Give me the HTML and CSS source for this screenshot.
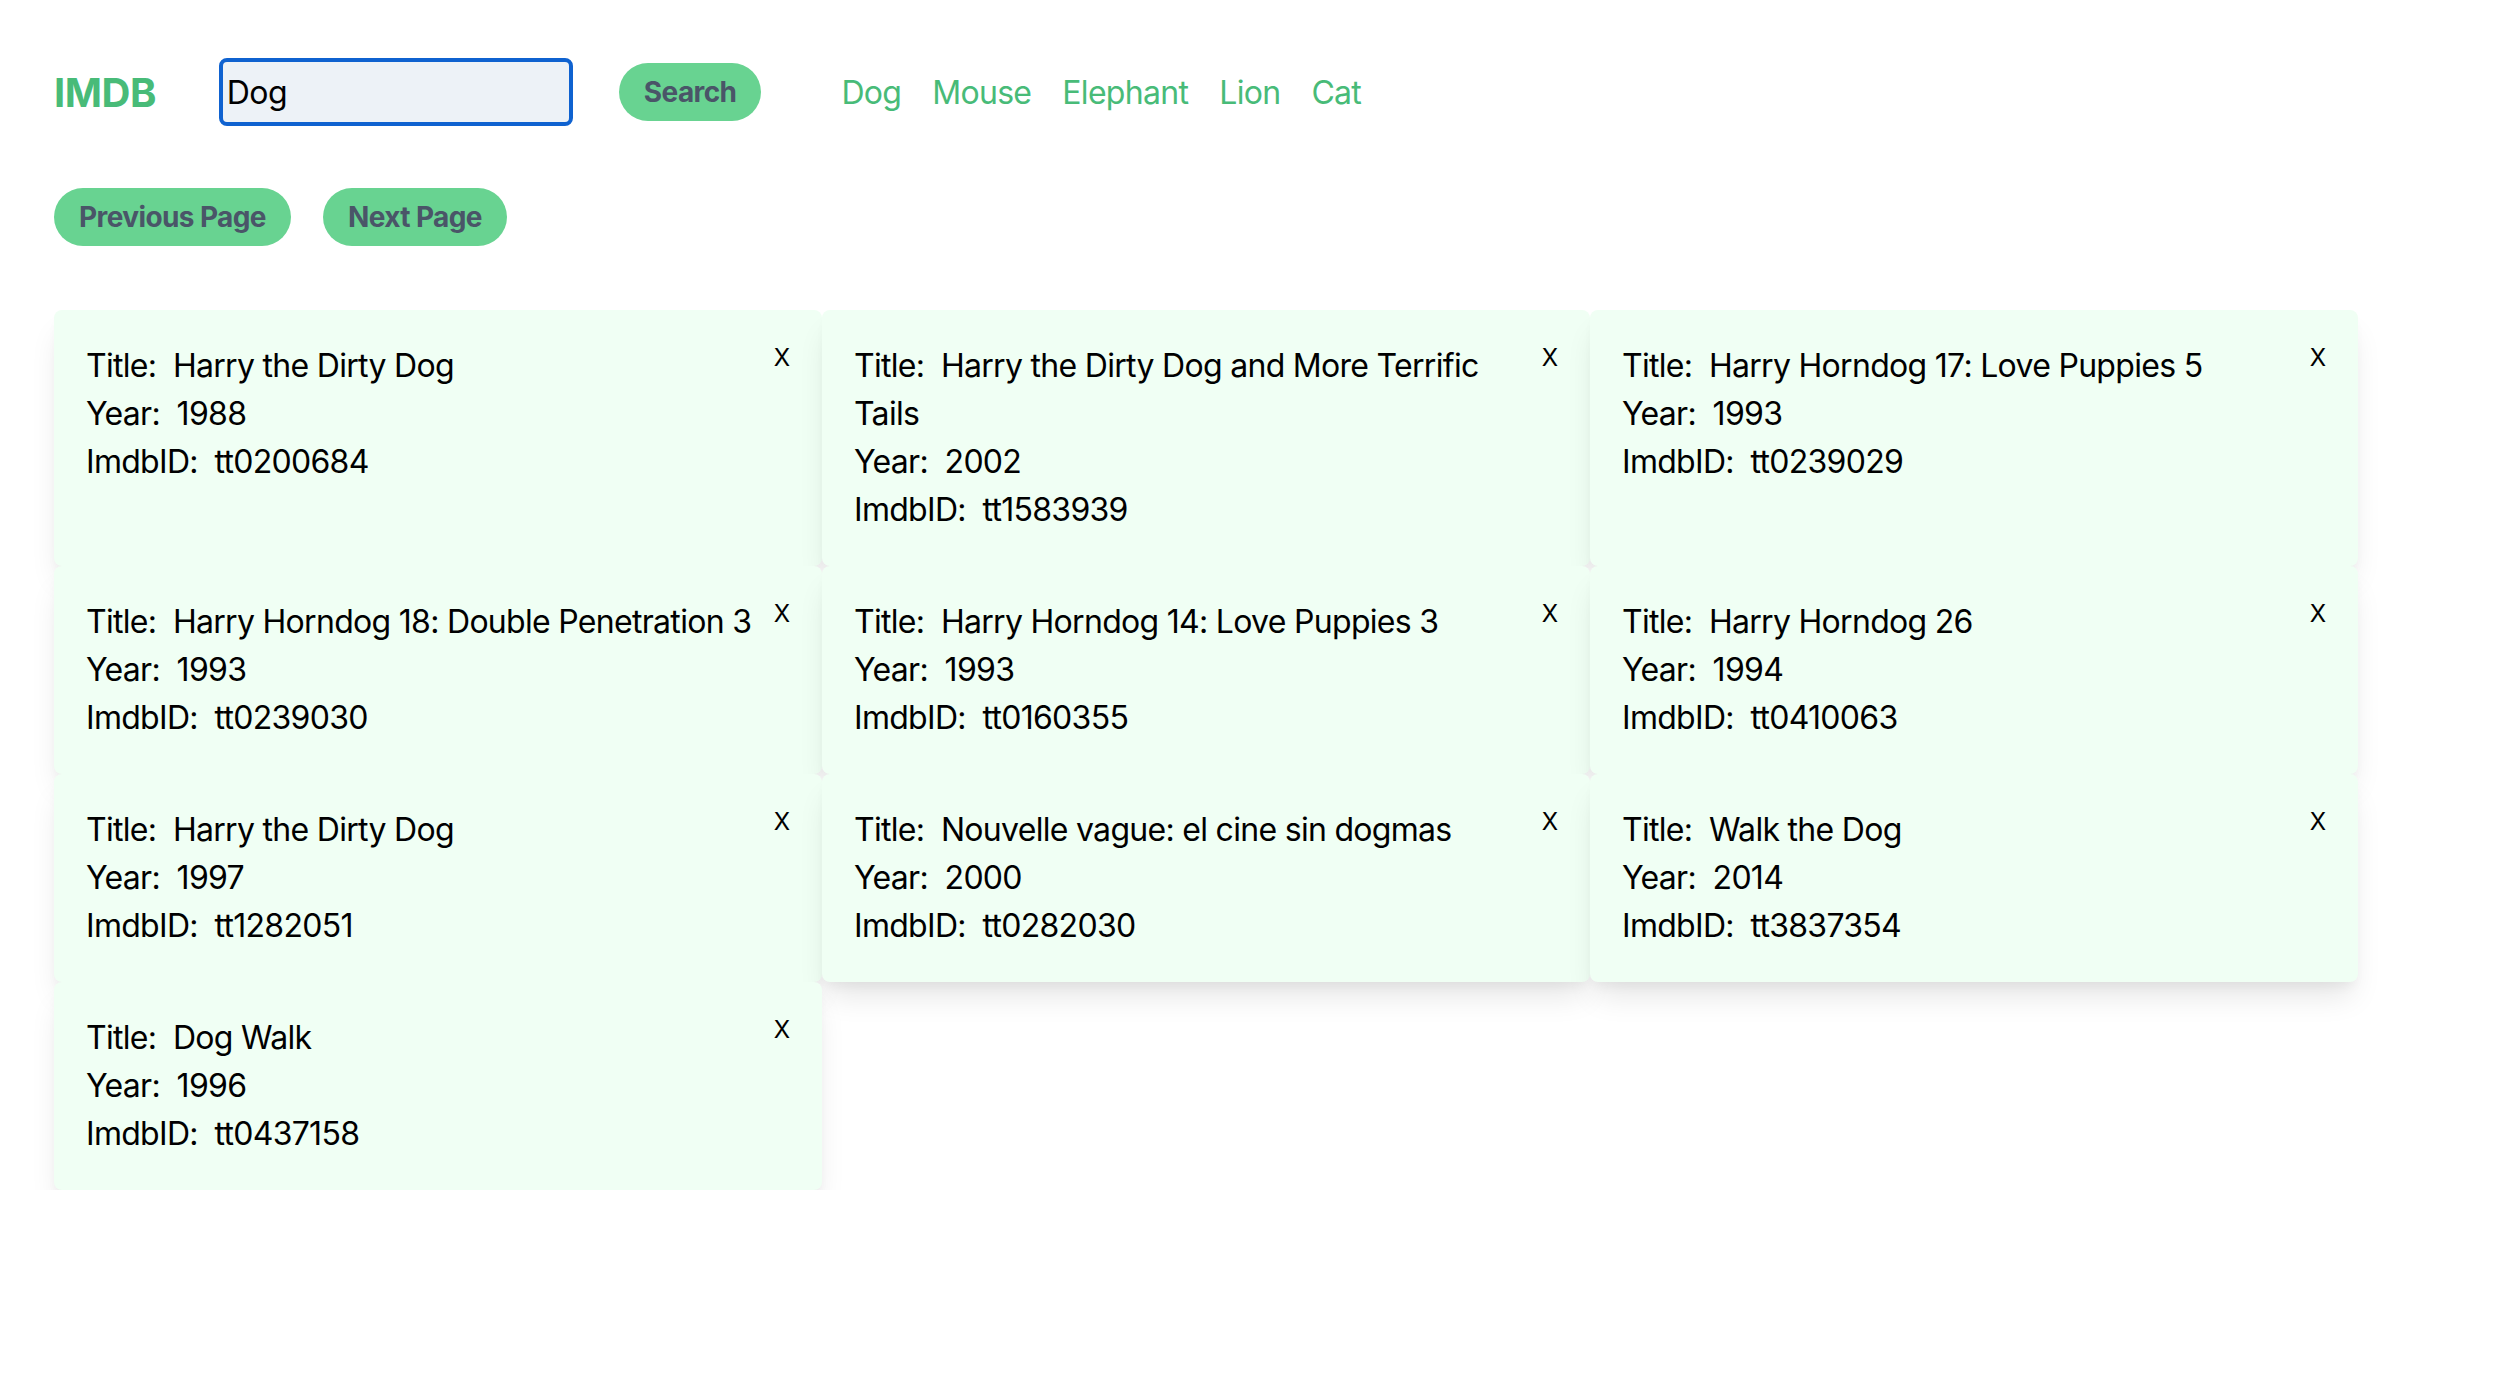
FILE: index.html
```html
<!DOCTYPE html>
<html lang="en">
<head>
<meta charset="utf-8">
<title>IMDB</title>
<link rel="stylesheet" href="styles.css">
</head>
<body>
<div class="app">
  <header class="topbar">
    <div class="logo">IMDB</div>
    <input class="search-input" type="text" value="Dog">
    <button class="pill search-btn">Search</button>
    <nav class="quick-links">
      <a class="quick-link" href="#">Dog</a>
      <a class="quick-link" href="#">Mouse</a>
      <a class="quick-link" href="#">Elephant</a>
      <a class="quick-link" href="#">Lion</a>
      <a class="quick-link" href="#">Cat</a>
    </nav>
  </header>

  <div class="pager">
    <button class="pill">Previous Page</button>
    <button class="pill">Next Page</button>
  </div>

  <main class="grid">
    <div class="card">
      <div class="info">
        <div>Title:&nbsp; Harry the Dirty Dog</div>
        <div>Year:&nbsp; 1988</div>
        <div>ImdbID:&nbsp; tt0200684</div>
      </div>
      <button class="close">X</button>
    </div>
    <div class="card">
      <div class="info">
        <div>Title:&nbsp; Harry the Dirty Dog and More Terrific Tails</div>
        <div>Year:&nbsp; 2002</div>
        <div>ImdbID:&nbsp; tt1583939</div>
      </div>
      <button class="close">X</button>
    </div>
    <div class="card">
      <div class="info">
        <div>Title:&nbsp; Harry Horndog 17: Love Puppies 5</div>
        <div>Year:&nbsp; 1993</div>
        <div>ImdbID:&nbsp; tt0239029</div>
      </div>
      <button class="close">X</button>
    </div>
    <div class="card">
      <div class="info">
        <div>Title:&nbsp; Harry Horndog 18: Double Penetration 3</div>
        <div>Year:&nbsp; 1993</div>
        <div>ImdbID:&nbsp; tt0239030</div>
      </div>
      <button class="close">X</button>
    </div>
    <div class="card">
      <div class="info">
        <div>Title:&nbsp; Harry Horndog 14: Love Puppies 3</div>
        <div>Year:&nbsp; 1993</div>
        <div>ImdbID:&nbsp; tt0160355</div>
      </div>
      <button class="close">X</button>
    </div>
    <div class="card">
      <div class="info">
        <div>Title:&nbsp; Harry Horndog 26</div>
        <div>Year:&nbsp; 1994</div>
        <div>ImdbID:&nbsp; tt0410063</div>
      </div>
      <button class="close">X</button>
    </div>
    <div class="card">
      <div class="info">
        <div>Title:&nbsp; Harry the Dirty Dog</div>
        <div>Year:&nbsp; 1997</div>
        <div>ImdbID:&nbsp; tt1282051</div>
      </div>
      <button class="close">X</button>
    </div>
    <div class="card">
      <div class="info">
        <div>Title:&nbsp; Nouvelle vague: el cine sin dogmas</div>
        <div>Year:&nbsp; 2000</div>
        <div>ImdbID:&nbsp; tt0282030</div>
      </div>
      <button class="close">X</button>
    </div>
    <div class="card">
      <div class="info">
        <div>Title:&nbsp; Walk the Dog</div>
        <div>Year:&nbsp; 2014</div>
        <div>ImdbID:&nbsp; tt3837354</div>
      </div>
      <button class="close">X</button>
    </div>
    <div class="card">
      <div class="info">
        <div>Title:&nbsp; Dog Walk</div>
        <div>Year:&nbsp; 1996</div>
        <div>ImdbID:&nbsp; tt0437158</div>
      </div>
      <button class="close">X</button>
    </div>
  </main>
</div>
</body>
</html>
```

FILE: styles.css
```css
* { box-sizing: border-box; }

body {
  margin: 0;
  background: #ffffff;
  font-family: Inter, "Liberation Sans", sans-serif;
  color: #000;
}

.app {
  padding: 58px 54px 0 54px;
}

.topbar {
  display: flex;
  align-items: center;
  height: 68px;
}

.logo {
  font-size: 40px;
  font-weight: 700;
  color: #48bb78;
  letter-spacing: -0.5px;
  margin-right: 63px;
}

.search-input {
  width: 354px;
  height: 68px;
  border: 4px solid #0f62d0;
  border-radius: 8px;
  background: #edf2f7;
  font-family: inherit;
  font-size: 32px;
  letter-spacing: -0.6px;
  padding: 0 4px;
  color: #000;
  outline: none;
  margin-right: 46px;
}

.pill {
  font-family: inherit;
  font-size: 28px;
  font-weight: 700;
  letter-spacing: -0.6px;
  color: #4a5568;
  background: #68d391;
  border: none;
  border-radius: 999px;
  height: 58px;
  padding: 0 25px;
  line-height: 40px;
}

.search-btn {
  margin-right: 80px;
}

.quick-links {
  display: flex;
  gap: 31px;
}

.quick-link {
  font-size: 32px;
  letter-spacing: -0.7px;
  color: #48bb78;
  text-decoration: none;
}

.pager {
  display: flex;
  gap: 32px;
  margin-top: 62px;
}

.grid {
  margin-top: 64px;
  width: 2304px;
  display: grid;
  grid-template-columns: repeat(3, 1fr);
}

.card {
  background: #f0fff4;
  border-radius: 8px;
  box-shadow: 0 20px 30px -6px rgba(0, 0, 0, 0.1), 0 8px 12px -4px rgba(0, 0, 0, 0.05);
  padding: 32px;
  display: flex;
  justify-content: space-between;
  align-items: flex-start;
  gap: 8px;
  font-size: 32px;
  line-height: 48px;
  letter-spacing: -0.7px;
}

.info {
  flex: 1;
  min-width: 0;
}

.close {
  font-family: inherit;
  font-size: 24px;
  line-height: 32px;
  background: none;
  border: none;
  padding: 0;
  color: #000;
}
```
